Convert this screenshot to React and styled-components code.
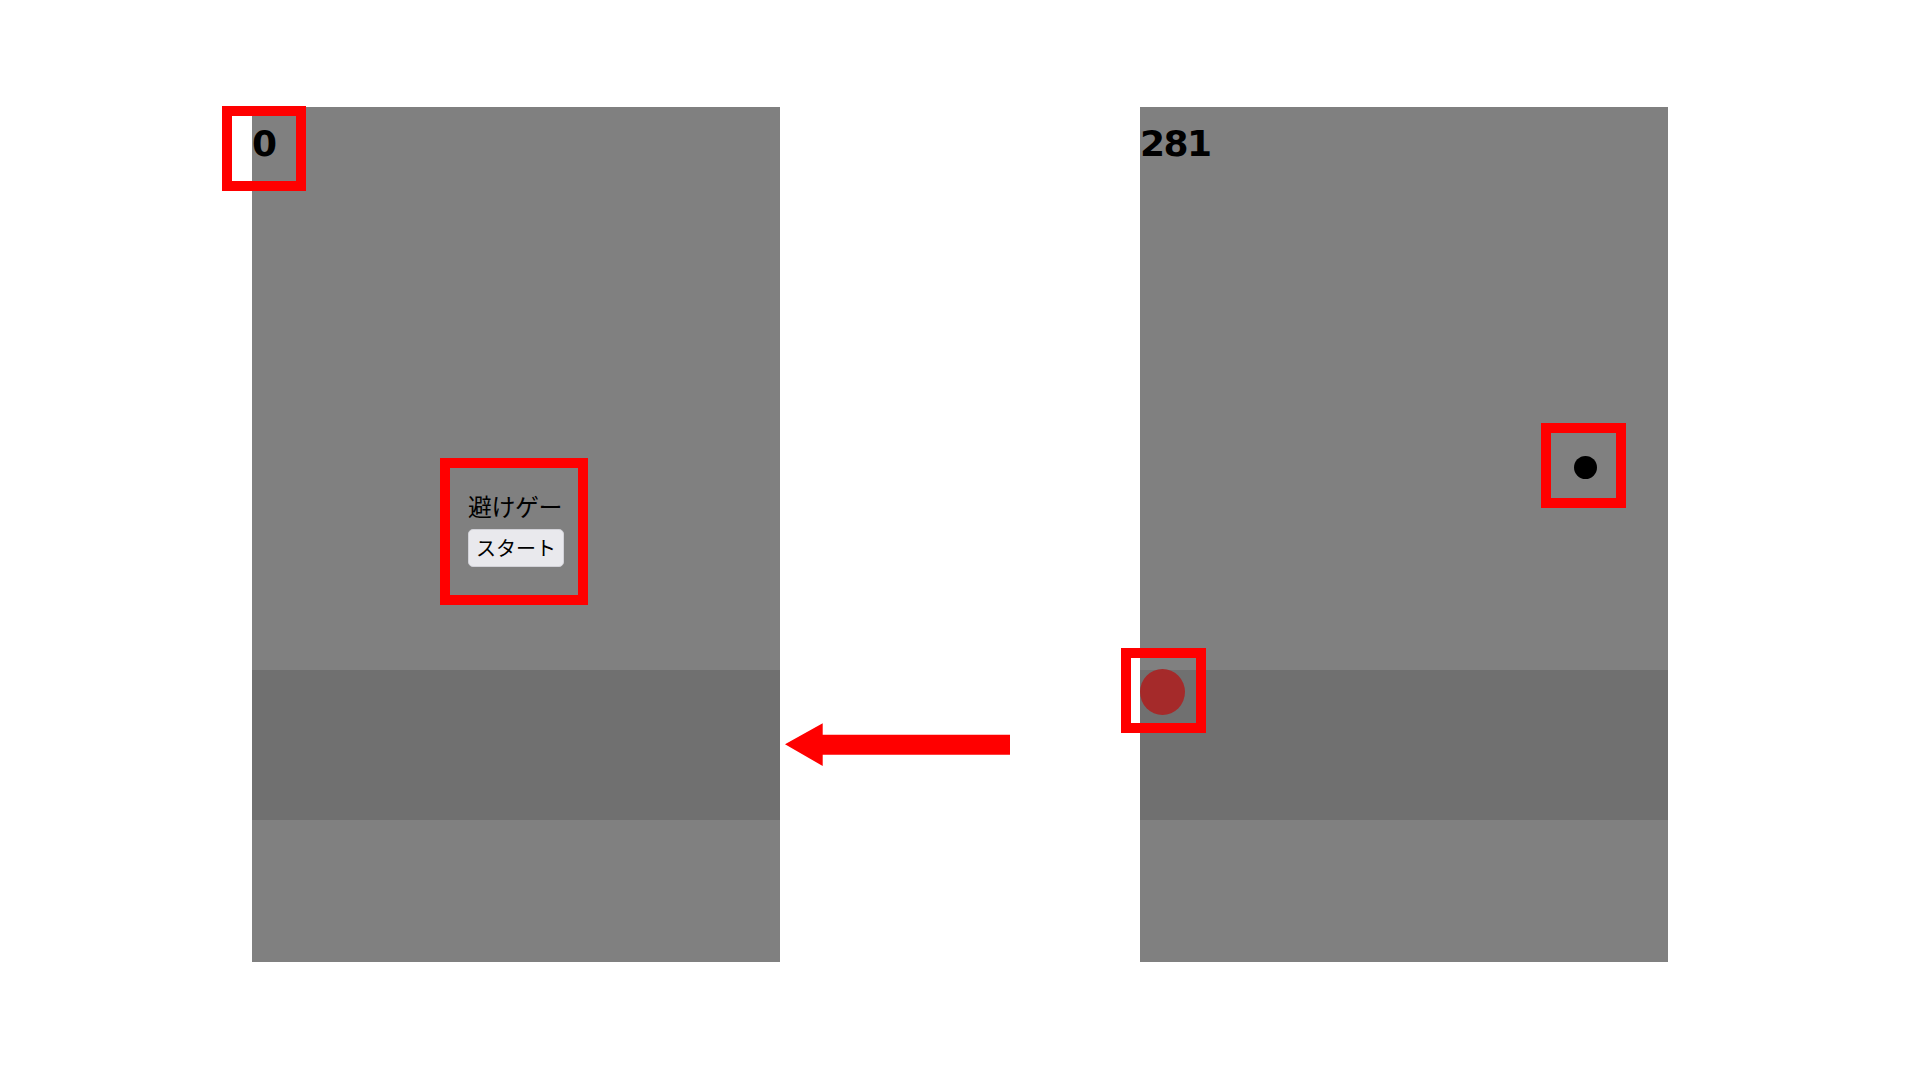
import React from 'react';
import styled, { createGlobalStyle } from 'styled-components';

const GlobalStyle = createGlobalStyle`
  html, body {
    margin: 0;
    padding: 0;
    background: #fff;
  }
`

const Stage = styled.div`
  position: relative;
  width: 1920px;
  height: 1080px;
  overflow: hidden;
  background: #fff;
`

const Row = styled.div`
  display: flex;
  gap: 360px;
  padding: 107px 0 0 252px;
`

const Board = styled.div`
  width: 528px;
  height: 855px;
  background-color: #808080;
  display: flex;
  flex-direction: column;
`

const Field = styled.div`
  position: relative;
  height: 563px;
  display: flex;
  flex-direction: column;
`

const Lane = styled.div`
  position: relative;
  height: 150px;
  background-color: #707070;
`

const Ground = styled.div`
  flex: 1;
`

const Score = styled.div`
  padding-top: 16px;
  font-family: "DejaVu Sans", "Liberation Sans", sans-serif;
  font-weight: bold;
  font-size: 36px;
  line-height: 42px;
  letter-spacing: -1.5px;
  color: #000;
`

const Menu = styled.div`
  align-self: center;
  width: 96px;
  margin-top: 324px;
  display: flex;
  flex-direction: column;
  align-items: flex-start;
`

const Title = styled.div`
  font-family: "Noto Sans CJK JP", sans-serif;
  font-size: 24px;
  line-height: 34px;
  letter-spacing: -0.5px;
  white-space: nowrap;
  color: #000;
`

const StartButton = styled.button`
  margin-top: 6px;
  width: 96px;
  height: 38px;
  padding: 0;
  font-family: "Noto Sans CJK JP", sans-serif;
  font-size: 20px;
  line-height: 36px;
  color: #000;
  background-color: #e9e9ed;
  border: 1px solid #d2d2d8;
  border-radius: 5px;
`

// game objects sit on a free canvas, so they are placed by coordinates
const Rock = styled.div`
  position: absolute;
  left: ${p => p.$x}px;
  top: ${p => p.$y}px;
  width: 23px;
  height: 23px;
  border-radius: 50%;
  background-color: #000;
`

const Player = styled.div`
  position: absolute;
  left: 0;
  top: -1px;
  width: 45px;
  height: 46px;
  border-radius: 50%;
  background-color: #a52a2a;
`

// red annotation layer drawn over the screenshot
const Marker = styled.div`
  position: absolute;
  left: ${p => p.$x}px;
  top: ${p => p.$y}px;
  width: ${p => p.$w}px;
  height: ${p => p.$h}px;
  border: 10px solid #ff0000;
  box-sizing: border-box;
  pointer-events: none;
`

const ArrowSvg = styled.svg`
  position: absolute;
  left: 780px;
  top: 718px;
`

const Arrow = () => (
  <ArrowSvg width="235" height="52" viewBox="0 0 235 52">
    <polygon
      points="5,26.3 42.7,5.3 42.7,16.7 230,16.7 230,36.7 42.7,36.7 42.7,48"
      fill="#ff0000"
    />
  </ArrowSvg>
)

const App = () => {
  return (
    <Stage>
      <GlobalStyle />
      <Row>
        <Board>
          <Field>
            <Score>0</Score>
            <Menu>
              <Title>避けゲー</Title>
              <StartButton>スタート</StartButton>
            </Menu>
          </Field>
          <Lane />
          <Ground />
        </Board>
        <Board>
          <Field>
            <Score>281</Score>
            <Rock $x={434} $y={349} />
          </Field>
          <Lane>
            <Player />
          </Lane>
          <Ground />
        </Board>
      </Row>
      <Marker $x={222} $y={106} $w={84} $h={85} />
      <Marker $x={440} $y={458} $w={148} $h={147} />
      <Marker $x={1541} $y={423} $w={85} $h={85} />
      <Marker $x={1121} $y={648} $w={85} $h={85} />
      <Arrow />
    </Stage>
  )
}

export default App
